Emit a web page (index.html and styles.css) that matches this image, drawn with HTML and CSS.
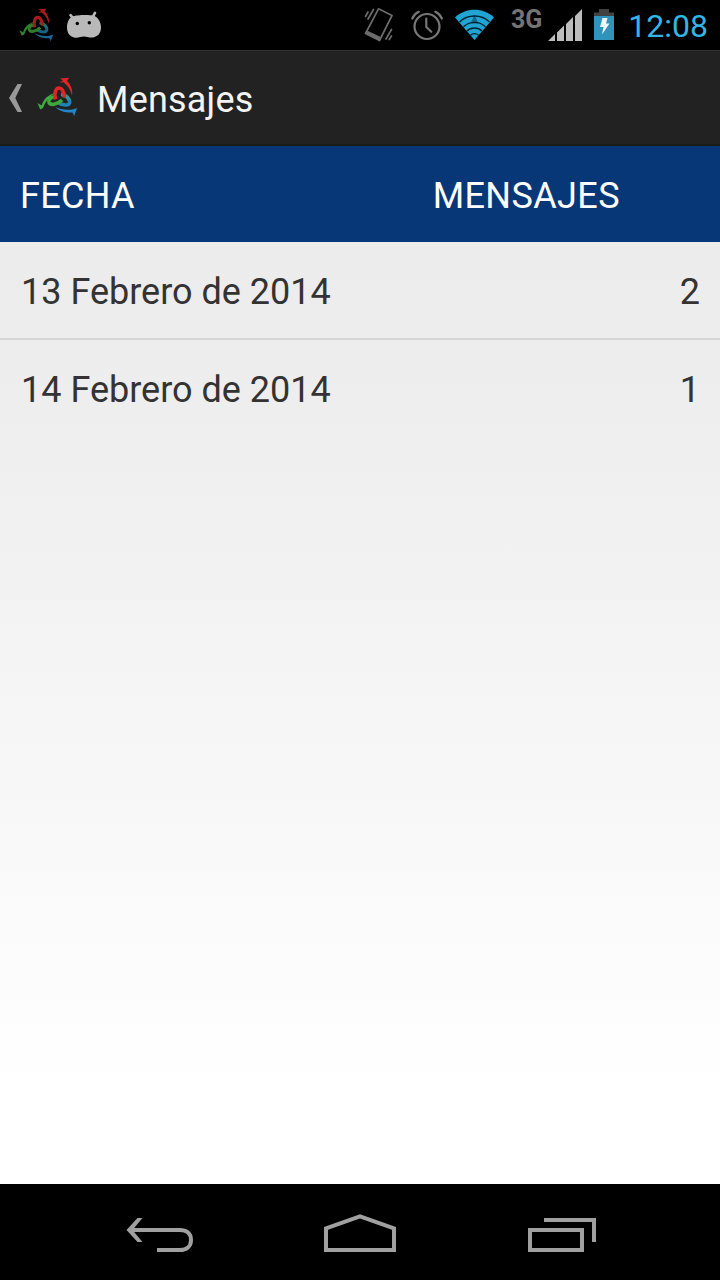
FILE: index.html
```html
<!DOCTYPE html>
<html lang="es">
<head>
    <meta charset="UTF-8">
    <meta name="viewport" content="width=device-width, initial-scale=1.0">
    <title>Mensajes</title>
    <link rel="stylesheet" href="styles.css">
</head>
<body>
    <svg class="defs" width="0" height="0">
        <symbol id="logo" viewBox="1 2 41 41">
            <g fill="none" stroke-width="3.6" stroke-linejoin="round">
                <path stroke="#2a9a9c" d="M25 19.500c3.500.3 7 2.500 8.500 6"/>
                <path stroke="#1f83b5" d="M33 24.500c1.500 3 .5 5.300-2.500 5.500-3 .2-6-.6-8.500-2.500"/>
                <path stroke="#3fa83b" d="M18.500 21.500c-4.500 1-6.500 3.500-5.500 6 1.300 3 8 2.500 13-2.500"/>
                <path stroke="#e32427" d="M19.300 24.500c-1.300-6 .2-11.500 3.700-11.500 3 0 5 3.700 5.500 9.500"/>
            </g>
            <path fill="#e32427" d="M24 3.500l9-.7-2 3.200c4 4 6 9 5 14.500-1.500-5.500-4-10-8.500-13.200l-4 .2 3.500-2z"/>
            <path fill="#1f87c8" d="M19.500 32c5 2.500 11 3.300 17 2.500l4.500-1.500-2.800 8-1.700-3.500c-7 .2-13-1-17-5.500z"/>
            <path fill="#3fae3f" d="M1.500 28l4.200 2.500c1.800-6 5.800-10.200 12.300-12.200-5 4-9 8.700-11 14.700l-2.800 1.500z"/>
        </symbol>
    </svg>
    <div class="screen">
        <div class="status-bar">
            <svg class="status-logo"><use href="#logo"/></svg>
            <svg class="status-android" viewBox="65 10 38 30">
                <path fill="#b9b9b9" d="M72 16.500C76 15 88 14.500 93 15.500c5.500 1.500 8 7 8 12 0 6-3.500 9-8 10-3.500.5-6.500-1-9-1-3 0-5 1.500-9 1.200-5-.7-8-4.700-8-10.200 0-5 2-9.500 5-11z"/>
                <path stroke="#b9b9b9" stroke-width="2.600" stroke-linecap="round" d="M70.500 15.200l3.500 4M95 12.800l-2.500 4.500"/>
                <circle cx="77.300" cy="23.500" r="1.700"/>
                <circle cx="89.300" cy="22.700" r="1.700"/>
            </svg>
            <svg class="status-vibrate" viewBox="362 6 34 38">
                <g fill="none" stroke="#6c6c6c" stroke-width="1.700" stroke-linecap="round">
                    <path stroke-linejoin="round" d="M378.500 8.800l13.500 6.700-12.500 25-14-7z"/>
                    <path d="M368 12l-2.500 4.500M373.500 9.500l-5.500 9.500M391.500 29.500l-5.500 9.500M391.500 36l-2.300 3.500"/>
                </g>
                <path fill="#6c6c6c" d="M367 30.500l14.200 6.800-1.700 3.500-14.300-7.300z"/>
            </svg>
            <svg class="status-alarm" viewBox="410 8 34 34">
                <g fill="none" stroke="#777" stroke-width="2.200" stroke-linecap="round" stroke-linejoin="round">
                    <circle cx="427" cy="26.500" r="12.500"/>
                    <path d="M426.300 18.500v8.500l5 4.800M412.300 18.500c1.200-3 3.400-5.300 6.500-6.700M435.300 11.800c3.200 1.500 5.300 3.600 6.600 6.700"/>
                </g>
            </svg>
            <svg class="status-wifi" viewBox="454 8 42 34">
                <path fill="#1fa4d3" d="M455 17.500C466 7.300 483 7.300 494 17.500L474.500 40z"/>
                <path fill="#17688a" d="M474.500 15l4 8.500h-8z"/>
                <g fill="none" stroke="#02222f" stroke-width="1.300">
                    <path d="M459.500 22c8-8 22-8 30 0M463.500 26.800c6-6 16-6 22 0M467 31c4-4 11-4 15 0M470.500 35.200c2-2.200 6-2.200 8 0"/>
                </g>
            </svg>
            <span class="network">3G</span>
            <svg class="status-signal" viewBox="547 8 36 34">
                <path fill="#bdbdbd" d="M548 41l7-7v7zM557 32.500l7-7V41h-7zM566 24l7-7v24h-7zM575 16l7-7v32h-7z"/>
            </svg>
            <svg class="status-battery" viewBox="593 8 22 34">
                <path fill="#424242" d="M599 9h10v3.500h5V17h-20v-4.500h5z"/>
                <path fill="#2f93bb" d="M594 16h20v24h-20z"/>
                <path fill="#f1f6f8" d="M602.500 18h5l-1.500 5.500h3.500l-7.500 11 1.500-7.500H600z"/>
            </svg>
            <span class="clock">12:08</span>
        </div>
        <div class="action-bar">
            <svg class="up-arrow" viewBox="8 83 15 30">
                <path fill="#999" d="M17.500 84H22l-6.700 14L22 112h-4.500L9 98z"/>
            </svg>
            <svg class="app-logo"><use href="#logo"/></svg>
            <h1 class="title">Mensajes</h1>
        </div>
        <div class="list-header">
            <span>FECHA</span>
            <span class="header-count">MENSAJES</span>
        </div>
        <div class="content">
            <div class="row">
                <span>13 Febrero de 2014</span>
                <span>2</span>
            </div>
            <div class="row">
                <span>14 Febrero de 2014</span>
                <span>1</span>
            </div>
        </div>
        <div class="nav-bar">
            <svg class="nav-back" viewBox="126 1214 70 40">
                <path fill="none" stroke="#a0a0a0" stroke-width="4" d="M131 1230h49c6 0 11 3 11 10s-5 10-11 10h-23"/>
                <path fill="#a0a0a0" d="M137.500 1218h5l-10 12 10 12h-5l-11-12z"/>
            </svg>
            <svg class="nav-home" viewBox="322 1212 76 42">
                <path fill="none" stroke="#a0a0a0" stroke-width="4" d="M326 1250v-21.600l34-12 34 12V1250z"/>
            </svg>
            <svg class="nav-recent" viewBox="526 1214 72 40">
                <path fill="none" stroke="#a0a0a0" stroke-width="4" d="M530 1230h52v20h-52zM544 1220h50v22"/>
            </svg>
        </div>
    </div>
</body>
</html>
```
FILE: styles.css
```css
body {
    margin: 0;
    background-color: #000;
    font-family: Roboto, sans-serif;
    font-size: 36px;
}
svg {
    display: block;
    flex-shrink: 0;
}
.defs {
    position: absolute;
}
.screen {
    display: flex;
    flex-direction: column;
    width: 720px;
    height: 1280px;
    overflow: hidden;
}
.status-bar {
    display: flex;
    align-items: flex-start;
    box-sizing: border-box;
    height: 50px;
    padding: 6px 12px 0 19px;
    background-color: #000;
}
.status-logo {
    width: 35px;
    height: 35px;
    margin-top: 2px;
    opacity: 0.75;
}
.status-android {
    width: 38px;
    height: 30px;
    margin: 4px 0 0 11px;
}
.status-vibrate {
    width: 34px;
    height: 38px;
    margin-left: auto;
}
.status-alarm {
    width: 34px;
    height: 34px;
    margin: 2px 0 0 14px;
}
.status-wifi {
    width: 42px;
    height: 34px;
    margin: 2px 0 0 10px;
}
.network {
    width: 36px;
    margin-left: 15px;
    color: #747474;
    font-size: 25px;
    font-weight: 700;
    line-height: 27px;
}
.status-signal {
    width: 36px;
    height: 34px;
    margin-top: 2px;
}
.status-battery {
    width: 22px;
    height: 34px;
    margin: 2px 0 0 10px;
}
.clock {
    width: 80px;
    margin-left: 13px;
    color: #33b5e5;
    font-size: 32px;
    line-height: 40px;
    text-align: right;
    white-space: nowrap;
}
.action-bar {
    display: flex;
    align-items: center;
    box-sizing: border-box;
    height: 96px;
    padding-left: 8px;
    border-top: 1px solid #303030;
    border-bottom: 2px solid #1a1c1b;
    background-color: #222;
}
.up-arrow {
    width: 15px;
    height: 30px;
}
.app-logo {
    width: 41px;
    height: 41px;
    margin-left: 14px;
}
.title {
    margin: 4px 0 0 19px;
    color: #f3f3f3;
    font-size: 36px;
    font-weight: 400;
    letter-spacing: 0.2px;
}
.list-header {
    display: flex;
    align-items: center;
    justify-content: space-between;
    box-sizing: border-box;
    height: 96px;
    padding: 3px 100px 0 20px;
    background-color: #083778;
    color: #fff;
    letter-spacing: 0.3px;
}
.header-count {
    letter-spacing: 0.4px;
}
.content {
    flex: 1;
    background: linear-gradient(#ececec, #eee 18%, #fff 90%);
}
.row {
    display: flex;
    align-items: center;
    justify-content: space-between;
    box-sizing: border-box;
    height: 96px;
    padding: 3px 20px 0 21px;
    color: #333;
}
.row + .row {
    height: 100px;
    border-top: 2px solid #d6d6d6;
    padding-top: 2px;
}
.nav-bar {
    display: flex;
    box-sizing: border-box;
    height: 96px;
    padding: 28px 0 0 126px;
    background-color: #000;
}
.nav-back {
    width: 70px;
    height: 40px;
    margin-top: 2px;
}
.nav-home {
    width: 76px;
    height: 42px;
    margin-left: 126px;
}
.nav-recent {
    width: 72px;
    height: 40px;
    margin: 2px 0 0 128px;
}
```
